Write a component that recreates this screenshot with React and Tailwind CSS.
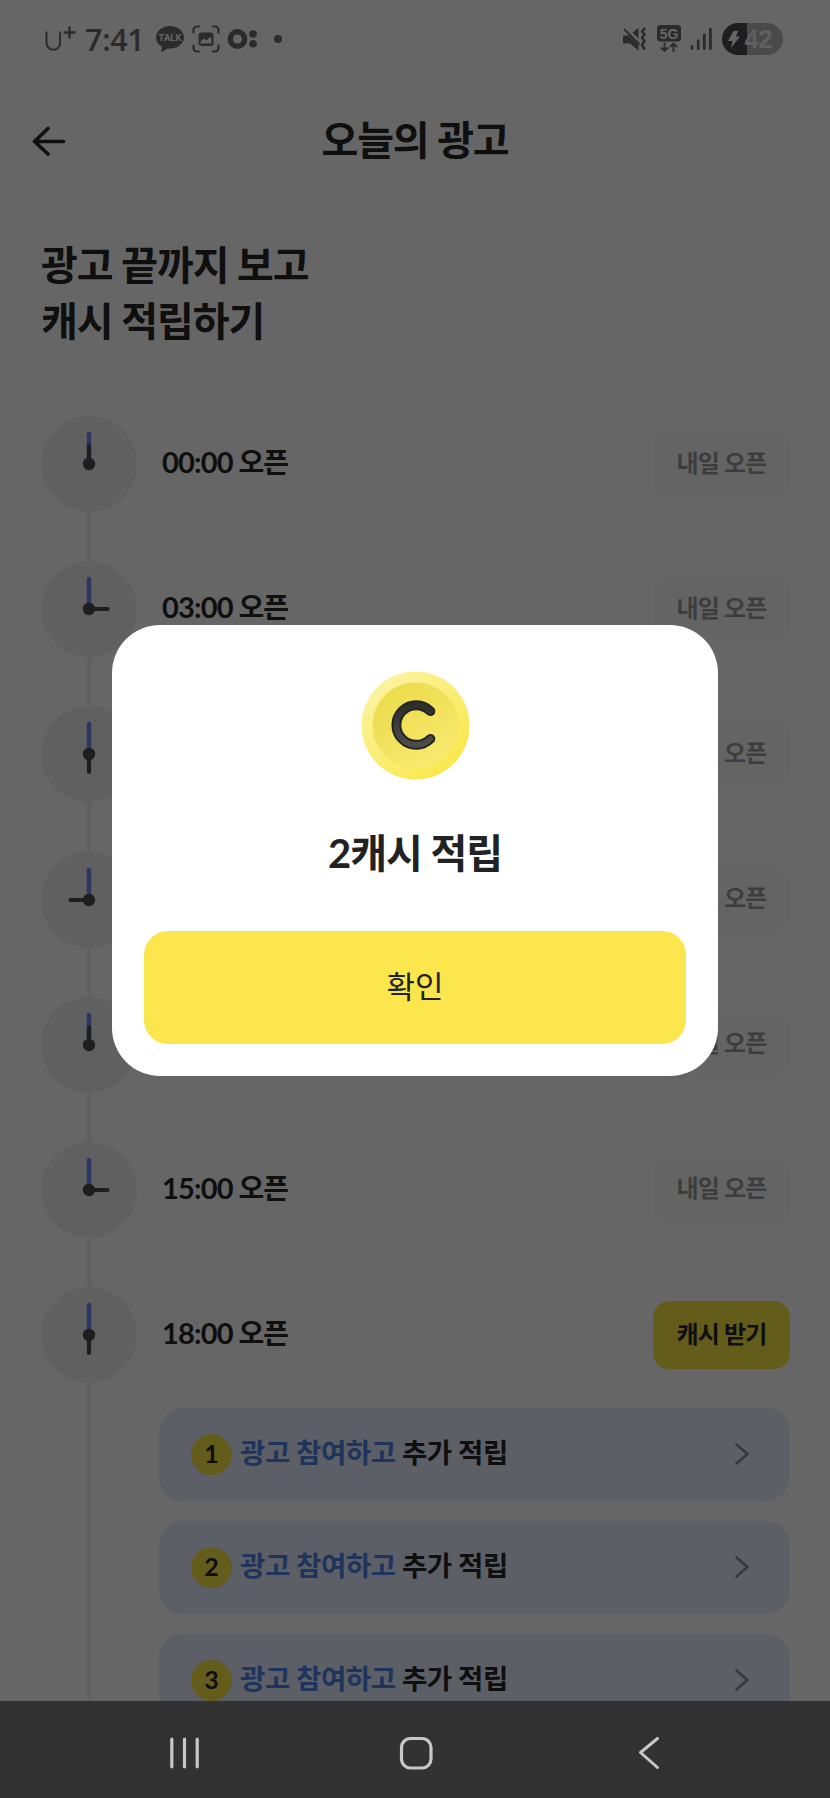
import React, { useState } from 'react';

const slots = [
  { time: '00:00', hand: 'up' },
  { time: '03:00', hand: 'right' },
  { time: '06:00', hand: 'down' },
  { time: '09:00', hand: 'left' },
  { time: '12:00', hand: 'up' },
  { time: '15:00', hand: 'right' },
  { time: '18:00', hand: 'down', open: true },
];

const hands = {
  up: [48, 30],
  right: [66.5, 48],
  down: [48, 66],
  left: [29.5, 48],
};

const Clock = ({ hand }) => {
  const [x, y] = hands[hand];
  return (
    <svg viewBox="0 0 96 96" className="size-24 shrink-0">
      <circle cx="48" cy="48" r="48" fill="#f0f0f0" />
      <path d="M48 18V48" stroke="#6e8cf5" strokeWidth="4.5" strokeLinecap="round" />
      <path
        d={`M48 48L${x} ${y}`}
        stroke="#4b4b4b"
        strokeWidth="4.2"
        strokeLinecap="round"
      />
      <circle cx="48" cy="48" r="6.2" fill="#4b4b4b" />
    </svg>
  );
};

const StatusBar = () => {
  return (
    <div className="flex h-[78px] shrink-0 items-center justify-between pl-[45px] pr-[47.5px] text-[#6b6b6b]">
      <div className="flex items-center">
        <svg viewBox="0 0 31 27" className="h-[27px] w-[31px]" fill="none" stroke="currentColor" strokeWidth="2">
          <path d="M1.5 5.5V17a6.8 6.8 0 0 0 13.6 0V5.5" />
          <path d="M24.5 0.5V12.5M18.5 6.5H30.5" strokeWidth="2.4" />
        </svg>
        <span className="ml-[9px] w-[59px] font-['Open_Sans',sans-serif] text-[30.5px] font-semibold leading-none tracking-[-0.3px]">
          7:41
        </span>
        <svg viewBox="0 0 28 28" className="ml-3 h-7 w-7 overflow-visible">
          <path
            d="M14 1C6.3 1 0 6 0 12.3c0 4.1 2.5 7.5 6.2 9.4L5 27.5l6.6-4.1c.8.1 1.6.2 2.4.2 7.7 0 14-5 14-11.3S21.7 1 14 1Z"
            fill="currentColor"
          />
          <text x="14" y="16" textAnchor="middle" fill="#fff" fontSize="9.5" fontWeight="700" fontFamily="Roboto, sans-serif">
            TALK
          </text>
        </svg>
        <svg viewBox="0 0 28 28" className="ml-2 h-7 w-7" fill="none" stroke="currentColor" strokeWidth="2.2" strokeLinecap="round">
          <path d="M1.5 7.5V5a3.5 3.5 0 0 1 3.5-3.5h2M21 1.5h2A3.5 3.5 0 0 1 26.5 5v2.5M26.5 20.5V23a3.5 3.5 0 0 1-3.5 3.5h-2M7 26.5H5A3.5 3.5 0 0 1 1.5 23v-2.5" />
          <rect x="6.5" y="7.5" width="15" height="13.5" rx="3" fill="currentColor" stroke="none" />
          <path d="M8.5 18.5v-2l3.5-3 2.5 2 3.5-3.7 1.5 2.2v4.5Z" fill="#fff" stroke="none" />
        </svg>
        <svg viewBox="0 0 30 22" className="ml-[7px] h-[22px] w-[30px]" fill="currentColor">
          <circle cx="10.5" cy="11" r="7.2" fill="none" stroke="currentColor" strokeWidth="5.4" />
          <circle cx="26" cy="6" r="3.8" />
          <circle cx="26" cy="15.8" r="3.8" />
        </svg>
        <span className="ml-[17px] size-2 rounded-full bg-current" />
      </div>
      <div className="flex items-center">
        <svg viewBox="0 0 24 24" className="h-6 w-6" fill="currentColor">
          <path d="M1 8.5h6L16.5 18v5.5L8 16.5H2.5Q1 16.5 1 15V8.5Z" />
          <path d="M16.5 1v10.5L10.5 5.5Z" />
          <path d="M2.5 2.5L17 17" stroke="currentColor" strokeWidth="1.8" strokeLinecap="round" />
          <path
            d="M22.5 1.5L20 4.5l2.5 3-2.5 3.5 2.5 3-2.5 4 2.5 4"
            fill="none"
            stroke="currentColor"
            strokeWidth="2.4"
            strokeLinejoin="round"
            strokeLinecap="round"
          />
        </svg>
        <svg viewBox="0 0 24 28" className="ml-[11px] h-7 w-6">
          <rect width="24" height="16.5" rx="3" fill="currentColor" />
          <text x="12" y="13.5" textAnchor="middle" fill="#fff" fontSize="14.5" fontWeight="700" fontFamily="Liberation Sans, Arial, sans-serif" textLength="18.5" lengthAdjust="spacingAndGlyphs">
            5G
          </text>
          <path
            d="M7.5 17.5V26M4 22.5L7.5 26L11 22.5M16.5 27V18.5M13 22L16.5 18.5L20 22"
            fill="none"
            stroke="currentColor"
            strokeWidth="1.9"
          />
        </svg>
        <svg viewBox="0 0 22 24" className="ml-[9px] h-6 w-[22px]" stroke="currentColor" strokeWidth="2.8" strokeLinecap="round">
          <path d="M2 19.5V21.5M8.2 14V21.5M14.3 8V21.5M20.4 2.5V21.5" />
        </svg>
        <div className="ml-[10px] flex h-8 w-[61px] items-center overflow-hidden rounded-full bg-[linear-gradient(90deg,#4b4b4b_25px,#b9b9b9_25px)] text-white">
          <svg viewBox="0 0 12 17" className="ml-[6px] h-[17px] w-3" fill="currentColor">
            <path d="M5.5 0H10L8 5.5h4L3 17l1.5-7H0Z" />
          </svg>
          <span className="ml-[5px] font-['Liberation_Sans',Arial,sans-serif] text-[25px] font-bold leading-none text-[#f0f0f0]">
            42
          </span>
        </div>
      </div>
    </div>
  );
};

const AdCard = ({ number }) => {
  return (
    <div className="flex h-[92.5px] shrink-0 items-center rounded-3xl bg-[#e6edff] pl-8 pr-[41px]">
      <span className="flex size-[41px] items-center justify-center rounded-full bg-[#fae641] pb-px text-[25px] font-bold leading-none">
        {number}
      </span>
      <p className="ml-2 whitespace-pre pb-[3px] text-[27.5px] font-bold leading-none tracking-[-0.4px]">
        <span className="text-[#4b82e6]">광고 참여하고</span> 추가 적립
      </p>
      <svg viewBox="0 0 14 22" className="ml-auto h-[22px] w-[14px]" fill="none" stroke="#8c8c8c" strokeWidth="2.6" strokeLinecap="round" strokeLinejoin="round">
        <path d="M1.5 1.5L12.5 11L1.5 20.5" />
      </svg>
    </div>
  );
};

const CoinIcon = () => {
  return (
    <svg viewBox="0 0 110 110" className="size-[109px]">
      <defs>
        <linearGradient id="rim" x1="0.15" y1="0.1" x2="0.8" y2="0.85">
          <stop offset="0" stopColor="#fcf3a0" />
          <stop offset="1" stopColor="#fae850" />
        </linearGradient>
        <linearGradient id="face" x1="0.2" y1="0.1" x2="0.75" y2="0.95">
          <stop offset="0" stopColor="#ecdc4c" />
          <stop offset="1" stopColor="#f9e970" />
        </linearGradient>
        <linearGradient id="letter" x1="0" y1="0" x2="0" y2="1">
          <stop offset="0" stopColor="#2e2e2c" />
          <stop offset="1" stopColor="#4c4c4c" />
        </linearGradient>
      </defs>
      <circle cx="55" cy="55" r="54.5" fill="url(#rim)" />
      <circle cx="55" cy="55" r="43.5" fill="url(#face)" />
      <path d="M70 40.5A20 20 0 1 0 70 68.5" fill="none" stroke="#24241e" strokeWidth="10" strokeLinecap="round" />
      <path d="M70 40.5A20 20 0 1 0 70 68.5" fill="none" stroke="url(#letter)" strokeWidth="6" strokeLinecap="round" />
    </svg>
  );
};

const RewardModal = ({ onClose }) => {
  return (
    <div className="absolute inset-0 flex items-center justify-center bg-black/60">
      <div className="flex h-[451px] w-[606px] flex-col items-center rounded-[48px] bg-white px-8 pb-8 pt-[46px] text-[#222]">
        <CoinIcon />
        <h2 className="mt-[43px] text-[40px] font-bold leading-[60px] tracking-[-1px]">
          2캐시 적립
        </h2>
        <button
          type="button"
          onClick={onClose}
          className="mt-auto h-[113px] w-full rounded-3xl bg-[#fbe64d] pb-[3px] text-[31px] leading-none"
        >
          확인
        </button>
      </div>
    </div>
  );
};

const NavigationBar = () => {
  return (
    <nav className="flex h-[97px] shrink-0 items-center bg-[#323232] pl-[169px] text-[#c8c8c8]">
      <svg viewBox="0 0 31 32" className="mt-[7px] h-8 w-[31px]" stroke="currentColor" strokeWidth="3.2" strokeLinecap="round">
        <path d="M2.8 2.2V29.8M15.5 2.2V29.8M28.2 2.2V29.8" />
      </svg>
      <svg viewBox="0 0 34 34" className="ml-[199px] mt-[7px] size-[34px]" fill="none" stroke="currentColor" strokeWidth="3.2">
        <rect x="2.5" y="2.5" width="29.5" height="29.5" rx="9" />
      </svg>
      <svg viewBox="0 0 22 34" className="ml-[205px] mt-[7px] h-[34px] w-[22px]" fill="none" stroke="currentColor" strokeWidth="3" strokeLinecap="round" strokeLinejoin="round">
        <path d="M19.5 2.5L2.5 16.5L19.5 31.5" />
      </svg>
    </nav>
  );
};

const App = () => {
  const [showModal, setShowModal] = useState(true);

  return (
    <div className="flex h-[1798px] w-[830px] flex-col overflow-hidden bg-white font-['Lato','Noto_Sans_CJK_KR',sans-serif] text-[#262626]">
      <main className="relative flex h-[1701px] flex-col overflow-hidden">
        <StatusBar />

        <header className="grid h-[124px] shrink-0 grid-cols-[1fr_auto_1fr] items-center px-8">
          <svg viewBox="0 0 34 30" className="mt-px h-[30px] w-[34px]" fill="none" stroke="currentColor" strokeWidth="3.6" strokeLinecap="round" strokeLinejoin="round">
            <path d="M16 2.5L2.5 15.5L16 28M3 15.5H31.5" />
          </svg>
          <h1 className="pb-px text-[40px] font-bold leading-none tracking-[-1.1px]">오늘의 광고</h1>
        </header>

        <h2 className="mt-[34.5px] shrink-0 pl-[41px] text-[40px] font-bold leading-[56px] tracking-[-1.05px]">
          광고 끝까지 보고
          <br />
          캐시 적립하기
        </h2>

        <section className="mt-[67.5px] shrink-0 pl-[41px] pr-10">
          {slots.map((slot) => (
            <div key={slot.time} className="flex">
              <div className="flex w-24 flex-col items-center">
                <Clock hand={slot.hand} />
                <span className="w-1 flex-1 bg-[#f0f0f0]" />
              </div>
              <div className={`flex flex-1 flex-col pl-[22px] ${slot.open ? '' : 'h-[145.2px]'}`}>
                <div className="flex h-24 shrink-0 items-center justify-between">
                  <p className="pb-[5px] pl-[3px] text-[28px] font-bold leading-none tracking-[-1px]">
                    <span className="text-[29px] tracking-[-0.8px]">{slot.time}</span> 오픈
                  </p>
                  {slot.open ? (
                    <button type="button" className="h-[68px] w-[137px] rounded-2xl bg-[#fae641] pb-[3px] text-2xl font-bold leading-none tracking-[-0.8px]">
                      캐시 받기
                    </button>
                  ) : (
                    <button type="button" disabled className="h-[68px] w-[137px] rounded-2xl bg-[#fafafa] pb-[3px] text-2xl font-bold leading-none tracking-[-0.8px] text-[#999]">
                      내일 오픈
                    </button>
                  )}
                </div>
                {slot.open && (
                  <div className="flex flex-col gap-[20.5px] pt-[25px]">
                    <AdCard number={1} />
                    <AdCard number={2} />
                    <AdCard number={3} />
                  </div>
                )}
              </div>
            </div>
          ))}
        </section>

        {showModal && <RewardModal onClose={() => setShowModal(false)} />}
      </main>
      <NavigationBar />
    </div>
  );
};

export default App;
